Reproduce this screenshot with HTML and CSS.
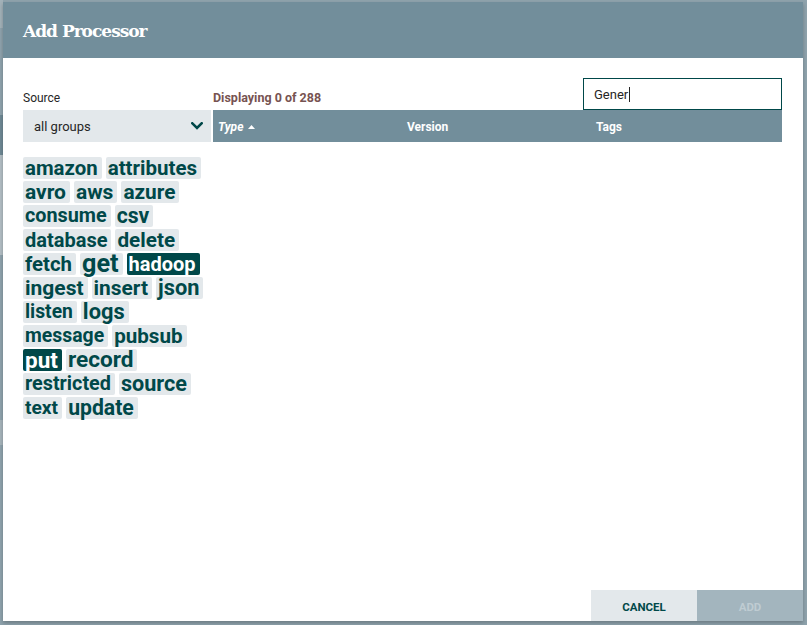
FILE: index.html
```html
<!DOCTYPE html>
<html>
<head>
<meta charset="utf-8">
<link rel="stylesheet" href="styles.css">
</head>
<body>
<div class="backdrop">
  <div class="bd bd-a"></div>
  <div class="bd bd-b"></div>
  <div class="bd bd-c"></div>
  <div class="bd bd-d"></div>
</div>
<div class="dialog">
  <div class="dialog-header"><h1>Add Processor</h1></div>
  <div class="dialog-body">
    <div class="left">
      <div class="top-row"><span class="label">Source</span></div>
      <div class="select">
        <span>all groups</span>
        <svg width="12" height="8" viewBox="0 0 12 8"><path d="M1.3 1.3 L6 6 L10.7 1.3" fill="none" stroke="#004849" stroke-width="2.6" stroke-linecap="square"/></svg>
      </div>
      <ul class="tags">
        <li class="tag" style="font-size:20.4px">amazon</li>
        <li class="tag" style="font-size:20.5px">attributes</li>
        <li class="tag" style="font-size:21px">avro</li>
        <li class="tag" style="font-size:21px">aws</li>
        <li class="tag" style="font-size:20.8px">azure</li>
        <li class="tag" style="font-size:19.8px">consume</li>
        <li class="tag" style="font-size:21.2px">csv</li>
        <li class="tag" style="font-size:20px">database</li>
        <li class="tag" style="font-size:20.7px">delete</li>
        <li class="tag" style="font-size:20.4px">fetch</li>
        <li class="tag" style="font-size:25.2px">get</li>
        <li class="tag sel" style="font-size:20px">hadoop</li>
        <li class="tag" style="font-size:21px">ingest</li>
        <li class="tag" style="font-size:20.9px">insert</li>
        <li class="tag" style="font-size:21.8px">json</li>
        <li class="tag" style="font-size:19.3px">listen</li>
        <li class="tag" style="font-size:21.8px">logs</li>
        <li class="tag" style="font-size:19.4px">message</li>
        <li class="tag" style="font-size:20.6px">pubsub</li>
        <li class="tag sel" style="font-size:22.5px">put</li>
        <li class="tag" style="font-size:22.6px">record</li>
        <li class="tag" style="font-size:19.8px">restricted</li>
        <li class="tag" style="font-size:21.6px">source</li>
        <li class="tag" style="font-size:19.2px">text</li>
        <li class="tag" style="font-size:21.2px">update</li>
      </ul>
    </div>
    <div class="right">
      <div class="top-row split">
        <span class="count">Displaying 0 of 288</span>
        <div class="search">Gener<span class="caret"></span></div>
      </div>
      <div class="grid-header">
        <div class="col col-type">Type <svg width="7" height="4" viewBox="0 0 7 4"><polygon points="0,4 3.5,0 7,4" fill="#fff"/></svg></div>
        <div class="col">Version</div>
        <div class="col">Tags</div>
      </div>
    </div>
  </div>
  <div class="dialog-footer">
    <button class="btn btn-cancel">Cancel</button>
    <button class="btn btn-add" disabled>Add</button>
  </div>
</div>
</body>
</html>
```
FILE: styles.css
```css
html, body {
  margin: 0;
  padding: 0;
}
body {
  width: 807px;
  height: 625px;
  overflow: hidden;
  position: relative;
  background: #8fa3ad;
  font-family: Roboto, "Noto Sans", sans-serif;
}
.backdrop {
  position: absolute;
  left: 0;
  top: 0;
  width: 3px;
  height: 625px;
}
.bd {
  position: absolute;
  left: 0;
  width: 3px;
}
.bd-a { top: 0; height: 28px; background: #a3b2b9; }
.bd-b { top: 115px; height: 40px; background: #6f8995; }
.bd-c { top: 155px; height: 100px; background: #b3bfc5; }
.bd-d { top: 420px; height: 25px; background: #a6b4bb; }

.dialog {
  position: absolute;
  left: 3px;
  top: 2px;
  width: 800px;
  height: 619px;
  background: #fff;
  display: flex;
  flex-direction: column;
  box-shadow: 0 2px 4px rgba(0, 0, 0, 0.25);
}
.dialog-header {
  flex: none;
  height: 56px;
  background: #728e9b;
  display: flex;
  align-items: center;
  padding-left: 20px;
}
.dialog-header h1 {
  margin: 0;
  font-family: "DejaVu Serif", serif;
  font-weight: bold;
  font-size: 17px;
  letter-spacing: -1px;
  color: #fff;
  padding-top: 2px;
}
.dialog-body {
  flex: 1;
  padding: 20px 20px 0;
  display: grid;
  grid-template-columns: 188px 569px;
  column-gap: 2px;
  align-content: start;
}
.top-row {
  height: 32px;
  display: flex;
  align-items: flex-end;
}
.top-row.split {
  justify-content: space-between;
}
.label {
  font-size: 12px;
  line-height: 14px;
  color: #262626;
  padding-bottom: 5px;
}
.select {
  height: 32px;
  background: #e3e8eb;
  display: flex;
  align-items: center;
  justify-content: space-between;
  padding: 0 8px 0 11px;
  font-size: 13px;
  color: #262626;
}
.select svg {
  display: block;
}
.tags {
  list-style: none;
  margin: 15px 0 0;
  padding: 0;
  display: flex;
  flex-wrap: wrap;
  gap: 2px 4px;
}
.tag {
  height: 22px;
  line-height: 22px;
  padding: 0 4px 0 2px;
  background: #e3e8eb;
  color: #004849;
  font-weight: bold;
  border-radius: 2px;
  white-space: nowrap;
}
.tag.sel {
  background: #004849;
  color: #fff;
}
.count {
  font-size: 12.5px;
  line-height: 14px;
  font-weight: bold;
  color: #775351;
  padding-bottom: 5px;
}
.search {
  box-sizing: border-box;
  width: 199px;
  height: 32px;
  border: 1px solid #004849;
  padding: 0 10px;
  display: flex;
  align-items: center;
  font-size: 13px;
  color: #262626;
}
.caret {
  display: inline-block;
  width: 1px;
  height: 15px;
  background: #262626;
  margin-left: 1px;
}
.grid-header {
  height: 32px;
  background: #728e9b;
  display: grid;
  grid-template-columns: 189px 189px 1fr;
  align-items: center;
  color: #fff;
  font-weight: bold;
  font-size: 12px;
}
.col {
  padding-left: 5px;
  padding-top: 1px;
}
.col-type {
  font-style: italic;
  display: flex;
  align-items: center;
  gap: 5px;
}
.dialog-footer {
  flex: none;
  display: flex;
  justify-content: flex-end;
}
.btn {
  width: 106px;
  height: 31px;
  border: none;
  margin: 0;
  padding: 2px 0 0;
  font-family: Roboto, "Noto Sans", sans-serif;
  font-weight: bold;
  font-size: 11.5px;
  text-transform: uppercase;
}
.btn-cancel {
  background: #e3e8eb;
  color: #004849;
}
.btn-add {
  background: #a3b5be;
  color: #bfccd2;
}
```
